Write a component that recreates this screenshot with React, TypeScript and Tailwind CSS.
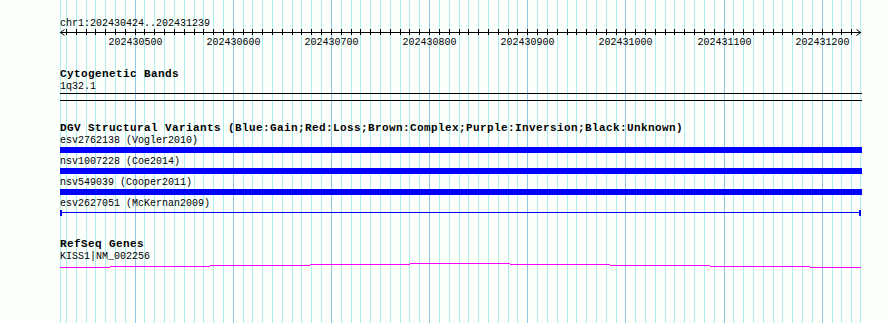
import React from 'react';

const START = 202430424;
const END = 202431239;
const WIDTH = 802;

// bp -> x offset inside the 802px track area
const toX = (bp: number) => Math.round(((bp - START) * 801) / 816);

const minorTicks: number[] = [];
for (let bp = 202430430; bp <= 202431230; bp += 10) minorTicks.push(bp);
const majorTicks = minorTicks.filter((bp) => bp % 100 === 0);

const mono = "font-['Liberation_Mono','DejaVu_Sans_Mono',monospace]";

const Grid: React.FC = () => (
  <svg className="absolute inset-0 pointer-events-none" width={890} height={323}>
    <rect x={60} y={0} width={1} height={323} fill="#aeeeee" />
    {minorTicks.map((bp) => (
      <rect
        key={bp}
        x={60 + toX(bp)}
        y={0}
        width={1}
        height={323}
        fill={bp % 100 === 0 ? '#90c6e6' : '#aeeeee'}
      />
    ))}
    <rect x={860} y={0} width={1} height={323} fill="#aeeeee" />
  </svg>
);

const Ruler: React.FC = () => (
  <svg width={WIDTH} height={18} className="block overflow-visible">
    <rect x={0} y={3} width={801} height={1} fill="#000" />
    {/* arrow heads */}
    <path d="M0.5 3.5 L4.5 0.5 M0.5 3.5 L4.5 6.5" stroke="#000" strokeWidth={1} fill="none" />
    <path d="M800.5 3.5 L796.5 0.5 M800.5 3.5 L796.5 6.5" stroke="#000" strokeWidth={1} fill="none" />
    {minorTicks.map((bp) => (
      <rect key={bp} x={toX(bp)} y={0} width={1} height={6} fill="#000" />
    ))}
    {majorTicks.map((bp) => (
      <text
        key={bp}
        x={toX(bp) + 0.5}
        y={15.6}
        textAnchor="middle"
        fontFamily="'Liberation Mono', monospace"
        fontSize={10}
        fill="#000"
      >
        {bp}
      </text>
    ))}
  </svg>
);

const Title: React.FC<{ children: React.ReactNode; className?: string }> = ({ children, className }) => (
  <div className={`h-[11px] leading-[11px] text-[11px] font-bold tracking-[0.4px] whitespace-nowrap text-black ${className || ''}`}>
    {children}
  </div>
);

const Label: React.FC<{ children: React.ReactNode; className?: string }> = ({ children, className }) => (
  <div className={`h-[10px] leading-[10px] text-[10px] whitespace-nowrap text-black ${className || ''}`}>
    {children}
  </div>
);

const variants = [
  { name: 'esv2762138 (Vogler2010)' },
  { name: 'nsv1007228 (Coe2014)' },
  { name: 'nsv549039 (Cooper2011)' },
];

// RefSeq gene drawn as a stepped magenta line
const geneSegments = [
  { x1: 60, x2: 110, y: 5 },
  { x1: 110, x2: 210, y: 4 },
  { x1: 210, x2: 310, y: 3 },
  { x1: 310, x2: 410, y: 2 },
  { x1: 410, x2: 510, y: 1 },
  { x1: 510, x2: 610, y: 2 },
  { x1: 610, x2: 710, y: 3 },
  { x1: 710, x2: 810, y: 4 },
  { x1: 810, x2: 861, y: 5 },
];

export default function App() {
  return (
    <div className={`relative w-[890px] h-[323px] overflow-hidden bg-[#fcfffc] ${mono}`}>
      <Grid />

      <div className="relative pl-[60px] pt-[19px]">
        {/* Ruler */}
        <Label>chr1:{START}..{END}</Label>
        <Ruler />

        {/* Cytogenetic Bands */}
        <Title className="mt-[22px]">Cytogenetic Bands</Title>
        <Label className="mt-[2px]">1q32.1</Label>
        <div className="mt-[1px] w-[802px] h-[8px] border-y border-black" />

        {/* DGV Structural Variants */}
        <Title className="mt-[22px]">
          DGV Structural Variants (Blue:Gain;Red:Loss;Brown:Complex;Purple:Inversion;Black:Unknown)
        </Title>
        <div className="mt-[2px] flex flex-col">
          {variants.map((v) => (
            <div key={v.name} className="h-[21px]">
              <Label>{v.name}</Label>
              <div className="mt-[1px] w-[802px] h-[6px] bg-[#0000ff]" />
            </div>
          ))}
          <Label>esv2627051 (McKernan2009)</Label>
          <svg width={WIDTH} height={7} className="block">
            <rect x={0} y={3} width={801} height={1} fill="#0000ff" />
            <rect x={0} y={1} width={2} height={6} fill="#0000ff" />
            <rect x={799} y={1} width={2} height={6} fill="#0000ff" />
          </svg>
        </div>

        {/* RefSeq Genes */}
        <Title className="mt-[23px]">RefSeq Genes</Title>
        <Label className="mt-[2px]">KISS1|NM_002256</Label>
        <svg width={WIDTH} height={8} className="block">
          {geneSegments.map((s) => (
            <rect key={s.x1} x={s.x1 - 60} y={s.y} width={s.x2 - s.x1} height={1} fill="#ff00ff" />
          ))}
        </svg>
      </div>
    </div>
  );
}
